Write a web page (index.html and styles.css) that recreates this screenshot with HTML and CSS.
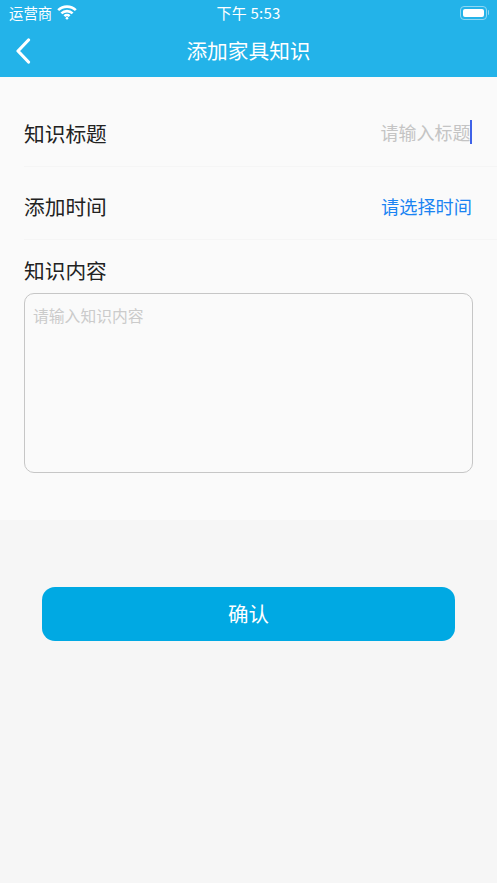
FILE: index.html
```html
<!DOCTYPE html>
<html lang="zh-CN">
<head>
<meta charset="utf-8">
<title>添加家具知识</title>
<link rel="stylesheet" href="styles.css">
</head>
<body>
<div class="page">
  <header class="header">
    <div class="status">
      <div class="status-left">
        <span class="carrier">运营商</span>
        <svg class="wifi" viewBox="0 0 20 15" width="20" height="15"><path d="M1.2 5.2a12.5 12.5 0 0 1 17.6 0" /><path d="M4.4 8.4a8 8 0 0 1 11.2 0" /><path d="M7.4 11.1a3.8 3.8 0 0 1 5.2 0" /><circle cx="10" cy="13.2" r="1.3" /></svg>
      </div>
      <span class="clock">下午 5:53</span>
      <div class="battery"><span class="battery-body"><span class="battery-fill"></span></span><span class="battery-cap"></span></div>
    </div>
    <div class="nav">
      <svg class="back" viewBox="0 0 16 26" width="16" height="26"><path d="M13.5 2 L3 13 L13.5 24" /></svg>
      <h1 class="title">添加家具知识</h1>
    </div>
  </header>
  <section class="panel">
    <div class="row row-first">
      <span class="label">知识标题</span>
      <span class="placeholder-wrap"><span class="placeholder">请输入标题</span><span class="caret"></span></span>
    </div>
    <div class="row">
      <span class="label">添加时间</span>
      <span class="link">请选择时间</span>
    </div>
    <div class="content">
      <div class="label">知识内容</div>
      <div class="textarea">请输入知识内容</div>
    </div>
  </section>
  <div class="action"><button class="confirm">确认</button></div>
</div>
</body>
</html>
```
FILE: styles.css
```css
* { box-sizing: border-box; }
html, body { margin: 0; padding: 0; }
body { font-family: "Noto Sans CJK SC", "Liberation Sans", sans-serif; background: #f6f6f6; }
.page { width: 497px; height: 883px; overflow: hidden; background: #f6f6f6; }
.header { height: 77px; background: #23b3e9; color: #fff; }
.status { height: 27px; display: flex; align-items: center; justify-content: space-between; padding: 0 8px 2px 9px; position: relative; }
.status-left { display: flex; align-items: center; gap: 5px; }
.carrier { font-size: 14.4px; line-height: 20px; }
.wifi { fill: #fff; stroke: none; }
.wifi path { fill: none; stroke: #fff; stroke-width: 2.6; }
.clock { position: absolute; left: 0; right: 0; text-align: center; font-size: 15px; line-height: 20px; letter-spacing: 0.2px; font-family: "Noto Sans CJK SC", sans-serif; }
.battery { display: flex; align-items: center; margin-left: auto; }
.battery-body { width: 27px; height: 14px; border: 1px solid #8ed7f3; border-radius: 4px; padding: 2px; display: block; }
.battery-fill { display: block; width: 100%; height: 100%; background: #fff; border-radius: 2px; }
.battery-cap { width: 1.5px; height: 5px; background: #8ed7f3; margin-left: 1px; border-radius: 0 1px 1px 0; }
.nav { height: 50px; position: relative; display: flex; align-items: center; justify-content: center; }
.back { position: absolute; left: 15px; top: 11px; fill: none; stroke: #fff; stroke-width: 3.2; stroke-linecap: round; stroke-linejoin: round; }
.title { margin: 0 0 5px; font-size: 20.7px; font-weight: 400; line-height: 28px; }
.panel { height: 443px; background: #fafafa; }
.row { height: 73px; margin-left: 24px; padding-top: 6px; padding-right: 25px; display: flex; align-items: center; justify-content: space-between; border-bottom: 1px solid #f5f5f5; }
.row-first { height: 90px; padding-top: 31px; padding-bottom: 9px; }
.label { font-size: 20.7px; font-weight: 400; line-height: 28px; color: #222; }
.placeholder-wrap { display: flex; align-items: center; font-size: 18px; line-height: 24px; margin-top: -1px; }
.placeholder { color: #c4c4c4; }
.caret { width: 2.4px; height: 24px; background: #3f62e8; margin-left: -1px; }
.link { font-size: 18.2px; line-height: 24px; color: #1a84f2; margin-top: -1px; }
.content { padding: 16px 24px 0; }
.textarea { height: 180px; margin-top: 9px; padding: 10px 8px; border: 1px solid #c6c6c6; border-radius: 10px; font-size: 15.8px; line-height: 24px; color: #cbcbcb; }
.action { padding: 67px 42px 0; }
.confirm { display: block; width: 100%; height: 54px; border: 0; border-radius: 13px; padding-bottom: 4px; background: #00a9e3; color: #fff; font: inherit; font-size: 20.5px; }
```
